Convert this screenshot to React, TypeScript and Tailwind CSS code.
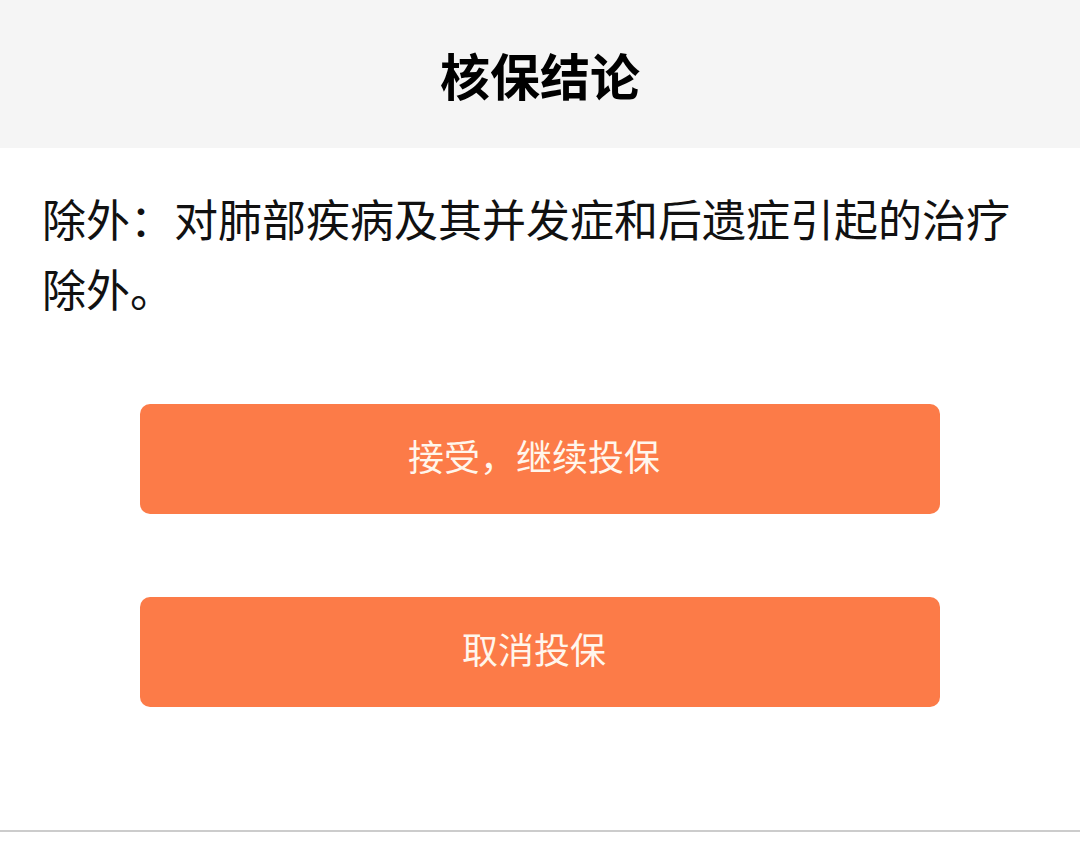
export default function App() {
  return (
    <div className="w-[1080px] h-[867px] bg-white flex flex-col" style={{ fontFamily: '"Noto Sans CJK SC", "Noto Sans", sans-serif' }}>
      <header className="h-[148px] bg-[#f5f5f5] flex items-center justify-center">
        <h1 className="text-[50px] font-bold text-black leading-none">核保结论</h1>
      </header>
      <p className="pt-[35px] px-[42px] text-[44px] leading-[70px] text-[#111]">
        除外：对肺部疾病及其并发症和后遗症引起的治疗除外。
      </p>
      <div className="mt-[81px] flex flex-col items-center gap-[83px]">
        <button className="w-[800px] h-[110px] rounded-[10px] bg-[#fc7b48] text-[#fff6ec] text-[36px] pb-[8px] pr-[12px]">
          接受，继续投保
        </button>
        <button className="w-[800px] h-[110px] rounded-[10px] bg-[#fc7b48] text-[#fff6ec] text-[36px] pb-[8px] pr-[12px]">
          取消投保
        </button>
      </div>
      <div className="mt-auto mb-[35px] h-[2px] bg-[#cccccc]" />
    </div>
  );
}
